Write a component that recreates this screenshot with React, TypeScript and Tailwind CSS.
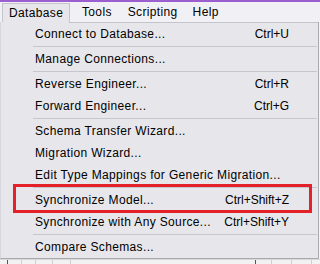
import React from "react";

type Row = { t: "i"; label: string; sc?: string } | { t: "s" };

const rows: Row[] = [
  { t: "i", label: "Connect to Database...", sc: "Ctrl+U" },
  { t: "s" },
  { t: "i", label: "Manage Connections..." },
  { t: "s" },
  { t: "i", label: "Reverse Engineer...", sc: "Ctrl+R" },
  { t: "i", label: "Forward Engineer...", sc: "Ctrl+G" },
  { t: "s" },
  { t: "i", label: "Schema Transfer Wizard..." },
  { t: "i", label: "Migration Wizard..." },
  { t: "i", label: "Edit Type Mappings for Generic Migration..." },
  { t: "s" },
  { t: "i", label: "Synchronize Model...", sc: "Ctrl+Shift+Z" },
  { t: "i", label: "Synchronize with Any Source...", sc: "Ctrl+Shift+Y" },
  { t: "s" },
  { t: "i", label: "Compare Schemas..." },
];

export default function App() {
  return (
    <div className="relative w-[320px] h-[264px] overflow-hidden bg-[#f4f4f6] text-[12px] tracking-[0.35px] text-black font-['Liberation_Sans',Arial,sans-serif]">
      <div className="h-[2px] bg-[#9b5fcf]" />
      <div className="h-[20px] bg-[#f1f1f5] flex items-end">
        <div className="ml-[2px] w-[68px] h-[19px] border border-b-0 border-[#c4c4cc] bg-[#e7e7eb] pl-[6px] leading-[18px]">
          Database
        </div>
        <div className="flex h-[19px] leading-[18px]">
          <span className="ml-[12px]">Tools</span>
          <span className="ml-[16px]">Scripting</span>
          <span className="ml-[15px]">Help</span>
        </div>
      </div>
      <div className="relative w-[319px] h-[237px] bg-[#e7e7eb] border-l border-r border-b border-l-[#d6d6de] border-r-[#a9a9b1] border-b-[#a9a9b1]">
        <div className="absolute left-[68px] right-0 top-0 h-px bg-[#c4c4cc]" />
        <div className="pt-[1px]">
          {rows.map((r, i) =>
            r.t === "s" ? (
              <div key={i} className="h-[3px] pt-[1px] pl-[32px] pr-[1px]">
                <div className="h-px bg-[#c6c6ce]" />
              </div>
            ) : (
              <div key={i} className="h-[22px] flex items-center justify-between pl-[34px] pr-[29px] whitespace-nowrap">
                <span>{r.label}</span>
                {r.sc && <span className="tracking-normal">{r.sc}</span>}
              </div>
            )
          )}
        </div>
      </div>
      <div className="flex h-[6px] bg-[#f2f2f2] border-t border-[#d8d8d8]">
        <div className="w-[8px] border-r border-[#555]" />
        <div className="w-[14px] border-r border-[#d0d0d0]" />
        <div className="w-[14px] border-r border-[#d0d0d0]" />
        <div className="w-[17px] border-r border-[#d0d0d0]" />
        <div className="w-[18px] border-r border-[#d0d0d0]" />
        <div className="w-[185px] border-r border-[#555]" />
        <div className="w-[16px] border-r border-[#d0d0d0]" />
        <div className="w-[20px] border-r border-[#d0d0d0]" />
        <div className="w-[20px] border-r border-[#d0d0d0]" />
      </div>
      <div className="absolute left-[13px] top-[184px] w-[299px] h-[29px] border-[3px] border-[#e42028]" />
    </div>
  );
}
